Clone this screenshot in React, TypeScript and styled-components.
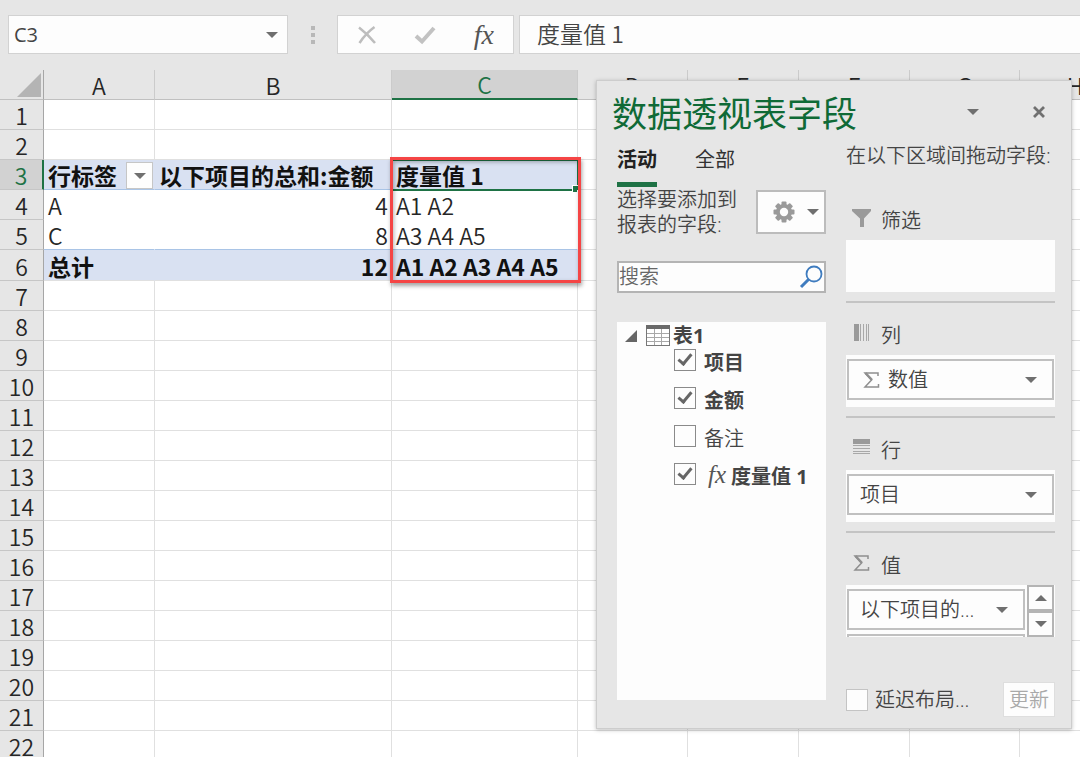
import React from "react";
import styled, { createGlobalStyle, css } from "styled-components";

const GREEN = "#1e7245";
const CHROME = "#e6e6e6";
const GRID = "#e0e0e0";
const SHEET_FONT = `"Noto Sans CJK SC", sans-serif`;
const PANEL_FONT = `"Open Sans", "Noto Sans CJK SC", sans-serif`;

const GlobalStyle = createGlobalStyle`
  *, *::before, *::after { box-sizing: border-box; }
  body { margin: 0; background: ${CHROME}; overflow: hidden; }
  button, input, select { font: inherit; color: inherit; margin: 0; border-radius: 0; }
`;

const Workbook = styled.main`
  display: flex;
  flex-direction: column;
  height: 100vh;
  position: relative;
  overflow: hidden;
  font-family: ${SHEET_FONT};
  font-weight: 350;
  font-size: 23px;
  color: #262626;
`;

/* Formula bar */
const FormulaBar = styled.header`
  display: flex;
  flex: none;
  padding: 15px 0 16px 8px;
  background: ${CHROME};
`;

const BarBox = styled.div`
  display: flex;
  align-items: center;
  height: 39px;
  background: #fdfdfd;
  border: 1px solid #d2d2d2;
`;

const NameBox = styled(BarBox)`
  width: 280px;
`;

const NameInput = styled.input`
  flex: 1;
  min-width: 0;
  padding: 0 5px;
  border: 0;
  background: none;
  font-family: ${PANEL_FONT};
  font-size: 20px;
  font-weight: 400;
  color: #444;
`;

const PlainButton = styled.button<{ $w: number }>`
  display: flex;
  align-items: center;
  justify-content: center;
  width: ${(p) => p.$w}px;
  height: 100%;
  padding: 0;
  border: 0;
  background: none;
  color: #777;
`;

const Grip = styled.div`
  display: flex;
  flex-direction: column;
  align-items: center;
  justify-content: center;
  gap: 3px;
  width: 49px;
  i {
    width: 4px;
    height: 4px;
    background: #b8b8b8;
  }
`;

const ActionBox = styled(BarBox)`
  width: 177px;
  margin-right: 5px;
  button { flex: 1; }
`;

const Fx = styled.span<{ $size: number }>`
  font-family: "Liberation Serif", serif;
  font-style: italic;
  font-weight: 400;
  font-size: ${(p) => p.$size}px;
  line-height: 1;
  color: #555;
`;

const FormulaBox = styled(BarBox)`
  flex: 1;
  border-right: 0;
`;

const FormulaInput = styled.input`
  width: 100%;
  height: 100%;
  padding: 0 17px 4px;
  border: 0;
  background: none;
  font-weight: 350;
  color: #444;
`;

/* Worksheet */
const SheetArea = styled.section`
  flex: 1;
  min-height: 0;
  overflow: hidden;
  background: #fff;
`;

const Grid = styled.table`
  table-layout: fixed;
  width: 1131px;
  border-collapse: separate;
  border-spacing: 0;
`;

const ColHead = styled.th<{ $active?: boolean }>`
  height: 30px;
  padding: 1px 0 0;
  line-height: 27px;
  font-weight: 350;
  background: ${(p) => (p.$active ? "#d2d2d2" : CHROME)};
  color: ${(p) => (p.$active ? GREEN : "#262626")};
  border-right: 1px solid #cbcbcb;
  border-bottom: ${(p) => (p.$active ? `2px solid ${GREEN}` : "1px solid #c0c0c0")};
`;

const Corner = styled.th`
  padding: 0 2px 2px 0;
  background: ${CHROME};
  border-right: 1px solid #a6a6a6;
  border-bottom: 1px solid #c0c0c0;
  text-align: right;
  vertical-align: bottom;
  line-height: 0;
`;

const Row = styled.tr<{ $tall?: boolean }>`
  height: ${(p) => (p.$tall ? 31 : 30)}px;
`;

const RowHead = styled.th<{ $active?: boolean }>`
  padding: 2px 0 0;
  line-height: 27px;
  font-weight: 350;
  background: ${(p) => (p.$active ? "#d2d2d2" : CHROME)};
  color: ${(p) => (p.$active ? GREEN : "#262626")};
  border-right: ${(p) => (p.$active ? `2px solid ${GREEN}` : "1px solid #a6a6a6")};
  border-bottom: 1px solid #c6c6c6;
`;

type Kind = "plain" | "head" | "body" | "last" | "total";

const kinds = {
  plain: css`
    border-color: ${GRID};
  `,
  head: css`
    background: #d9e1f2;
    border-color: #d9e1f2;
    border-bottom-color: #a9c4e6;
    font-weight: 700;
    color: #111;
  `,
  body: css`
    border-color: #fff;
  `,
  last: css`
    border-color: #fff;
    border-bottom-color: #a9c4e6;
  `,
  total: css`
    background: #d9e1f2;
    border-color: #d9e1f2;
    border-bottom-color: ${GRID};
    font-weight: 700;
    color: #111;
  `,
};

const Cell = styled.td<{ $kind: Kind; $right?: boolean }>`
  position: relative;
  padding: 2px 3px 0 4px;
  line-height: 27px;
  white-space: nowrap;
  text-align: ${(p) => (p.$right ? "right" : "left")};
  border: 0 solid;
  border-right-width: 1px;
  border-bottom-width: 1px;
  ${(p) => kinds[p.$kind]}
`;

const LabelCell = styled.div`
  display: flex;
  align-items: center;
  justify-content: space-between;
  margin-right: -2px;
`;

const FilterButton = styled.button`
  display: flex;
  align-items: center;
  justify-content: center;
  width: 27px;
  height: 27px;
  padding: 0;
  background: #fdfdfd;
  border: 1px solid #c6c6c6;
`;

const Selection = styled.div`
  position: absolute;
  inset: -1px -2px -2px -1px;
  border: 2px solid ${GREEN};
  &::after {
    content: "";
    position: absolute;
    right: -2px;
    bottom: -3px;
    width: 7px;
    height: 7px;
    background: ${GREEN};
    border: 1px solid #fff;
    border-width: 1px 0 0 1px;
  }
`;

const Highlight = styled.div`
  position: absolute;
  z-index: 1;
  top: -3px;
  left: -2px;
  width: 191px;
  height: 126px;
  border: 3px solid #f54545;
  box-shadow: 1px 3px 4px rgba(0, 0, 0, 0.35), inset 1px 2px 4px rgba(0, 0, 0, 0.3);
`;

/* Field pane */
const Pane = styled.aside`
  position: absolute;
  top: 80px;
  right: 8px;
  width: 476px;
  z-index: 2;
  padding: 0 16px 11px 20px;
  background: ${CHROME};
  border: 1px solid #cdcdcd;
  box-shadow: 0 1px 4px rgba(0, 0, 0, 0.25);
  font-family: ${PANEL_FONT};
  font-size: 20px;
  line-height: 25px;
  color: #444;
`;

const PaneHeader = styled.div`
  display: flex;
  align-items: center;
  height: 62px;
  margin: 0 -17px 0 -5px;
`;

const PaneTitle = styled.h1`
  flex: 1;
  margin: 0;
  font-family: ${SHEET_FONT};
  font-size: 35px;
  line-height: 50px;
  font-weight: 400;
  color: #0f6a36;
`;

const Columns = styled.div`
  display: grid;
  grid-template-columns: 1fr 1fr;
  gap: 20px;
`;

const Column = styled.div`
  display: flex;
  flex-direction: column;
  min-width: 0;
`;

const Tabs = styled.div`
  display: flex;
  gap: 38px;
`;

const Tab = styled.button<{ $active?: boolean }>`
  height: 44px;
  padding: 0 0 5px;
  border: 0;
  border-bottom: 5px solid ${(p) => (p.$active ? GREEN : "transparent")};
  background: none;
  line-height: 34px;
  font-weight: ${(p) => (p.$active ? 700 : 400)};
  color: ${(p) => (p.$active ? "#222" : "#333")};
`;

const HintRow = styled.div`
  display: flex;
  align-items: center;
  justify-content: space-between;
  p { margin: 0; white-space: nowrap; }
`;

const GearButton = styled.button`
  display: flex;
  align-items: center;
  justify-content: center;
  gap: 12px;
  width: 70px;
  height: 44px;
  padding: 0;
  padding-left: 10px;
  background: #fdfdfd;
  border: 2px solid #bcbcbc;
`;

const SearchBox = styled.label`
  display: flex;
  align-items: center;
  height: 32px;
  margin-top: 24px;
  padding-right: 1px;
  background: #fdfdfd;
  border: 2px solid #b4b4b4;
  input {
    flex: 1;
    min-width: 0;
    height: 28px;
    padding: 0 0 2px;
    border: 0;
    background: none;
    outline: 0;
  }
  input::placeholder { color: #666; opacity: 1; }
`;

const FieldList = styled.div`
  flex: 1;
  margin: 29px 0 17px;
  background: #fdfdfd;
`;

const TableRow = styled.div`
  display: flex;
  align-items: center;
  height: 27px;
  padding-left: 8px;
  font-weight: 700;
  svg:first-child { margin-right: 9px; }
  svg + svg { margin-right: 3px; }
`;

const FieldRow = styled.label<{ $bold?: boolean }>`
  display: flex;
  align-items: center;
  height: 22px;
  margin-bottom: 16px;
  padding-left: 57px;
  gap: 8px;
  font-weight: ${(p) => (p.$bold ? 700 : 350)};
  white-space: nowrap;
`;

const FieldName = styled.span`
  display: flex;
  align-items: center;
  gap: 5px;
  padding-top: 4px;
  ${Fx} { padding: 0 0 4px 4px; }
`;

const Check = styled.input.attrs({ type: "checkbox" })<{ $light?: boolean }>`
  appearance: none;
  flex: none;
  width: 22px;
  height: 22px;
  background: #fdfdfd;
  border: 1px solid ${(p) => (p.$light ? "#c4c4c4" : "#8a8a8a")};
  position: relative;
  &:checked::after {
    content: "";
    position: absolute;
    left: 6px;
    top: 1px;
    width: 8px;
    height: 14px;
    border: solid #666;
    border-width: 0 3px 3px 0;
    transform: rotate(40deg);
  }
`;

const DragHint = styled.p`
  margin: 0 -8px 20px 0;
  line-height: 25px;
  white-space: nowrap;
`;

const ZoneTitle = styled.h2`
  display: flex;
  align-items: center;
  height: 52px;
  margin: 0;
  padding: 12px 0 0 5px;
  gap: 8px;
  font-size: 20px;
  line-height: 25px;
  font-weight: 350;
  svg { width: 22px; height: 22px; margin-bottom: 4px; }
`;

const Zone = styled.div`
  display: flex;
  align-items: flex-start;
  height: 52px;
  padding: 4px 1px 0;
  overflow: hidden;
  background: #fdfdfd;
`;

const Rule = styled.hr`
  width: 100%;
  height: 2px;
  margin: 9px 0 0;
  border: 0;
  background: #c4c4c4;
`;

const ItemStack = styled.div`
  display: flex;
  flex: 1;
  min-width: 0;
  flex-direction: column;
  gap: 4px;
`;

const Item = styled.div`
  position: relative;
  display: flex;
  flex: none;
  align-items: center;
  width: 100%;
  height: 41px;
  padding-left: 11px;
  border: 2px solid #c0c0c0;
  background: #fdfdfd;
  select {
    appearance: none;
    flex: 1;
    min-width: 0;
    height: 100%;
    padding: 0;
    border: 0;
    background: none;
  }
  > svg:last-child {
    position: absolute;
    right: 15px;
    pointer-events: none;
  }
`;

const SigmaSlot = styled.span`
  display: flex;
  width: 28px;
  padding-left: 1px;
`;

const Spinner = styled.div`
  display: flex;
  flex-direction: column;
  margin: -4px 0 0 2px;
  button {
    display: flex;
    align-items: center;
    justify-content: center;
    width: 27px;
    height: 26px;
    padding: 0;
    background: #fdfdfd;
    border: 2px solid #b4b4b4;
  }
`;

const Footer = styled.div`
  display: flex;
  align-items: center;
  justify-content: space-between;
  margin-top: 45px;
  label { display: flex; align-items: center; gap: 7px; }
`;

const UpdateButton = styled.button`
  width: 52px;
  height: 35px;
  padding: 0;
  background: #fdfdfd;
  border: 1px solid #dedede;
  color: #a9a9a9;
`;

const Arrow = ({ up }: { up?: boolean }) => (
  <svg width="12" height="6" viewBox="0 0 12 6" aria-hidden="true">
    <path d={up ? "M0 6L6 0L12 6Z" : "M0 0L6 6L12 0Z"} fill="#6f6f6f" />
  </svg>
);

const Sigma = () => (
  <svg width="22" height="22" viewBox="0 0 22 22" aria-hidden="true">
    <path
      d="M17 7V4H4L10.500 11L4 18H17.500V15"
      fill="none"
      stroke="#8f8f8f"
      strokeWidth="1.500"
    />
    <path d="M4.500 4L11 11" stroke="#8f8f8f" strokeWidth="2.500" />
  </svg>
);

const Gear = () => (
  <svg width="22" height="22" viewBox="0 0 22 22" aria-hidden="true">
    <g fill="#9a9a9a">
      {[0, 45, 90, 135].map((a) => (
        <rect key={a} x="8.500" y="0.500" width="5" height="21" rx="1" transform={`rotate(${a} 11 11)`} />
      ))}
      <circle cx="11" cy="11" r="8" />
    </g>
    <circle cx="11" cy="11" r="4.200" fill="#fdfdfd" />
  </svg>
);

const COLS = [
  { name: "A", w: 111 },
  { name: "B", w: 237 },
  { name: "C", w: 186 },
  { name: "D", w: 110 },
  { name: "E", w: 111 },
  { name: "F", w: 111 },
  { name: "G", w: 110 },
  { name: "H", w: 111 },
];

const DATA: Record<number, { kind: Kind; cells: string[] }> = {
  3: { kind: "head", cells: ["行标签", "以下项目的总和:金额", "度量值 1"] },
  4: { kind: "body", cells: ["A", "4", "A1 A2"] },
  5: { kind: "last", cells: ["C", "8", "A3 A4 A5"] },
  6: { kind: "total", cells: ["总计", "12", "A1 A2 A3 A4 A5"] },
};

const FIELDS = [
  { name: "项目", on: true },
  { name: "金额", on: true },
  { name: "备注", on: false },
  { name: "度量值 1", on: true, measure: true },
];

function Sheet() {
  return (
    <SheetArea>
      <Grid>
        <colgroup>
          <col width={44} />
          {COLS.map((c) => (
            <col key={c.name} width={c.w} />
          ))}
        </colgroup>
        <thead>
          <tr>
            <Corner aria-label="全选">
              <svg width="24" height="24" viewBox="0 0 24 24" aria-hidden="true">
                <path d="M24 0V24H0Z" fill="#b4b4b4" />
              </svg>
            </Corner>
            {COLS.map((c) => (
              <ColHead key={c.name} $active={c.name === "C"}>{c.name}</ColHead>
            ))}
          </tr>
        </thead>
        <tbody>
          {Array.from({ length: 22 }, (_, i) => i + 1).map((n) => {
            const row = DATA[n];
            return (
              <Row key={n} $tall={row?.kind === "total"}>
                <RowHead $active={n === 3}>{n}</RowHead>
                {COLS.map((c, i) => {
                  const text = row?.cells[i];
                  if (text === undefined) return <Cell key={c.name} $kind="plain" />;
                  return (
                    <Cell key={c.name} $kind={row.kind} $right={i === 1 && n > 3}>
                      {n === 3 && i === 0 ? (
                        <LabelCell>
                          {text}
                          <FilterButton aria-label="筛选行标签"><Arrow /></FilterButton>
                        </LabelCell>
                      ) : (
                        text
                      )}
                      {n === 3 && i === 2 && (
                        <>
                          <Selection />
                          <Highlight />
                        </>
                      )}
                    </Cell>
                  );
                })}
              </Row>
            );
          })}
        </tbody>
      </Grid>
    </SheetArea>
  );
}

function FieldPane() {
  return (
    <Pane>
      <PaneHeader>
        <PaneTitle>数据透视表字段</PaneTitle>
        <PlainButton $w={66} aria-label="任务窗格选项"><Arrow /></PlainButton>
        <PlainButton $w={66} aria-label="关闭">
          <svg width="12" height="12" viewBox="0 0 12 12" aria-hidden="true">
            <path d="M1 1L11 11M11 1L1 11" stroke="#707070" strokeWidth="2.800" />
          </svg>
        </PlainButton>
      </PaneHeader>
      <Columns>
        <Column>
          <Tabs>
            <Tab $active>活动</Tab>
            <Tab>全部</Tab>
          </Tabs>
          <HintRow>
            <p>选择要添加到<br />报表的字段:</p>
            <GearButton aria-label="工具"><Gear /><Arrow /></GearButton>
          </HintRow>
          <SearchBox>
            <input type="text" placeholder="搜索" aria-label="搜索" />
            <svg width="24" height="24" viewBox="0 0 24 24" fill="none" stroke="#3f7cbf" aria-hidden="true">
              <circle cx="15" cy="9" r="7.500" strokeWidth="1.800" />
              <path d="M9.500 14.500L2 22" strokeWidth="3" />
            </svg>
          </SearchBox>
          <FieldList>
            <TableRow>
              <svg width="12" height="12" viewBox="0 0 12 12" aria-hidden="true">
                <path d="M12 0V12H0Z" fill="#666" />
              </svg>
              <svg width="24" height="21" viewBox="0 0 24 21" aria-hidden="true">
                <rect x="0.500" y="0.500" width="23" height="20" fill="#fff" stroke="#777" />
                <rect width="24" height="4" fill="#6a6a6a" />
                <path d="M1 8.500H23M1 12.500H23M1 16.500H23M8.500 4V20M15.500 4V20" stroke="#a8a8a8" />
              </svg>
              表1
            </TableRow>
            {FIELDS.map((f) => (
              <FieldRow key={f.name} $bold={f.on}>
                <Check defaultChecked={f.on} />
                <FieldName>
                  {f.measure && <Fx $size={25}>fx</Fx>}
                  {f.name}
                </FieldName>
              </FieldRow>
            ))}
          </FieldList>
        </Column>
        <Column>
          <DragHint>在以下区域间拖动字段:</DragHint>
          <ZoneTitle>
            <svg viewBox="0 0 22 22" aria-hidden="true">
              <path d="M1 2H20V4L13 11.500V20H9V11.500L1 4Z" fill="#9a9a9a" />
            </svg>
            筛选
          </ZoneTitle>
          <Zone />
          <Rule />
          <ZoneTitle>
            <svg viewBox="0 0 22 22" aria-hidden="true">
              <path d="M3 2H8V19H3Z" fill="#9a9a9a" />
              <path d="M9.500 2V19M12.500 2V19M15.500 2V19M17.500 2V19" stroke="#a8a8a8" />
            </svg>
            列
          </ZoneTitle>
          <Zone>
            <Item>
              <SigmaSlot><Sigma /></SigmaSlot>
              <select aria-label="列"><option>数值</option></select>
              <Arrow />
            </Item>
          </Zone>
          <Rule />
          <ZoneTitle>
            <svg viewBox="0 0 22 22" aria-hidden="true">
              <path d="M2 2H19V7H2Z" fill="#9a9a9a" />
              <path d="M2 8.500H19M2 11.500H19M2 14.500H19M2 16.500H19" stroke="#a8a8a8" />
            </svg>
            行
          </ZoneTitle>
          <Zone>
            <Item>
              <select aria-label="行"><option>项目</option></select>
              <Arrow />
            </Item>
          </Zone>
          <Rule />
          <ZoneTitle><Sigma />值</ZoneTitle>
          <Zone>
            <ItemStack>
              <Item>
                <select aria-label="值"><option>以下项目的...</option></select>
                <Arrow />
              </Item>
              <Item />
            </ItemStack>
            <Spinner>
              <button aria-label="向上"><Arrow up /></button>
              <button aria-label="向下"><Arrow /></button>
            </Spinner>
          </Zone>
          <Footer>
            <label><Check $light />延迟布局...</label>
            <UpdateButton disabled>更新</UpdateButton>
          </Footer>
        </Column>
      </Columns>
    </Pane>
  );
}

export default function App() {
  return (
    <Workbook>
      <GlobalStyle />
      <FormulaBar>
        <NameBox>
          <NameInput aria-label="名称框" defaultValue="C3" />
          <PlainButton $w={30} aria-label="名称列表"><Arrow /></PlainButton>
        </NameBox>
        <Grip><i /><i /><i /></Grip>
        <ActionBox>
          <PlainButton $w={58} aria-label="取消">
            <svg width="20" height="20" viewBox="0 0 20 20" fill="none" stroke="#bdbdbd" aria-hidden="true">
              <path d="M2 2.500C8 7 13 12 18 18M17.500 2C12 6 7 11 2.500 18" strokeWidth="2.500" />
            </svg>
          </PlainButton>
          <PlainButton $w={58} aria-label="输入">
            <svg width="22" height="20" viewBox="0 0 22 20" fill="none" stroke="#c2c2c2" aria-hidden="true">
              <path d="M2 11L8 16.500L20 3" strokeWidth="4" />
            </svg>
          </PlainButton>
          <PlainButton $w={58} aria-label="插入函数"><Fx $size={28}>fx</Fx></PlainButton>
        </ActionBox>
        <FormulaBox>
          <FormulaInput aria-label="编辑栏" defaultValue="度量值 1" />
        </FormulaBox>
      </FormulaBar>
      <Sheet />
      <FieldPane />
    </Workbook>
  );
}
